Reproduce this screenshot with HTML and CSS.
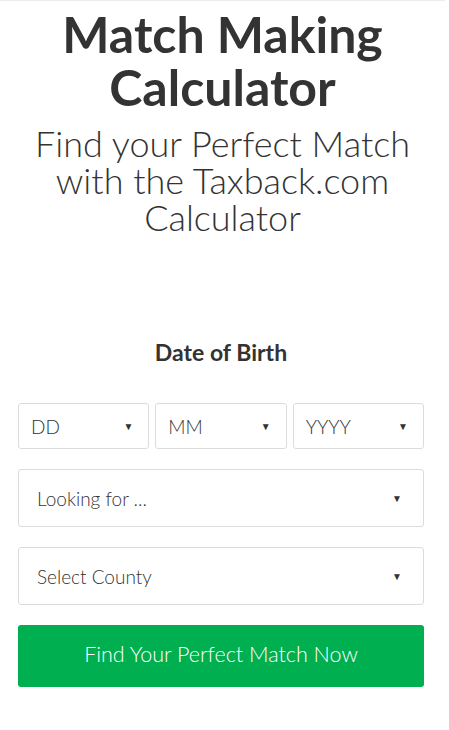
FILE: index.html
```html
<!DOCTYPE html>
<html lang="en">
<head>
<meta charset="utf-8">
<title>Match Making Calculator</title>
<link rel="stylesheet" href="styles.css">
</head>
<body>
<div class="page">
  <header class="hero">
    <h1 class="title">Match Making<br>Calculator</h1>
    <p class="subtitle">Find your Perfect Match<br>with the Taxback.com<br>Calculator</p>
  </header>
  <form class="form">
    <h2 class="dob">Date of Birth</h2>
    <div class="dob-row">
      <div class="field small"><select class="sel"><option>DD</option></select><span class="arrow">&#9660;</span></div>
      <div class="field small"><select class="sel"><option>MM</option></select><span class="arrow">&#9660;</span></div>
      <div class="field small"><select class="sel"><option>YYYY</option></select><span class="arrow">&#9660;</span></div>
    </div>
    <div class="field big"><select class="sel"><option>Looking for ...</option></select><span class="arrow">&#9660;</span></div>
    <div class="field big"><select class="sel"><option>Select County</option></select><span class="arrow">&#9660;</span></div>
    <button type="button" class="cta">Find Your Perfect Match Now</button>
  </form>
</div>
</body>
</html>
```
FILE: styles.css
```css
html, body {
  margin: 0;
  padding: 0;
  background: #fff;
}
body {
  font-family: Lato, "Open Sans", sans-serif;
  color: #333;
}
.page {
  border-top: 1px solid #ececec;
  margin-right: 4px;
}
.hero {
  text-align: center;
  padding-top: 7px;
}
.title {
  margin: 0;
  font-size: 50px;
  font-weight: 700;
  line-height: 53px;
  color: #333;
}
.subtitle {
  margin: 11px 0 0;
  font-size: 36px;
  font-weight: 300;
  line-height: 37px;
  color: #333;
}
.form {
  margin: 103px 21px 0 18px;
  display: flex;
  flex-direction: column;
}
.dob {
  margin: 0 0 37px;
  text-align: center;
  font-size: 23px;
  font-weight: 700;
  line-height: 27px;
  padding-right: 3px;
  padding-left: 3px;
}
.dob-row {
  display: grid;
  grid-template-columns: repeat(3, 1fr);
  gap: 6px;
  margin-bottom: 20px;
}
.field {
  position: relative;
  border: 1px solid #dcdcdc;
  border-radius: 3px;
  background: #fff;
}
.small {
  height: 44px;
}
.big {
  height: 56px;
  margin-bottom: 20px;
}
.sel {
  -webkit-appearance: none;
  appearance: none;
  border: 0;
  background: transparent;
  width: 100%;
  height: 100%;
  font-family: Lato, "Open Sans", sans-serif;
  font-weight: 300;
  color: #333;
  font-size: 19px;
  outline: none;
  margin: 0;
}
.small .sel {
  padding: 0 0 0 12px;
}
.big .sel {
  padding: 0 0 0 18px;
}
.arrow {
  position: absolute;
  top: 50%;
  transform: translateY(-50%);
  font-size: 10px;
  color: #333;
  pointer-events: none;
}
.small .arrow { right: 15px; }
.big .arrow { right: 21px; }
.cta {
  height: 62px;
  border: 0;
  border-radius: 3px;
  background: #00af50;
  color: #fff;
  font-family: Lato, "Open Sans", sans-serif;
  font-weight: 300;
  font-size: 21.5px;
  padding: 0 0 5px;
  cursor: pointer;
}
```
